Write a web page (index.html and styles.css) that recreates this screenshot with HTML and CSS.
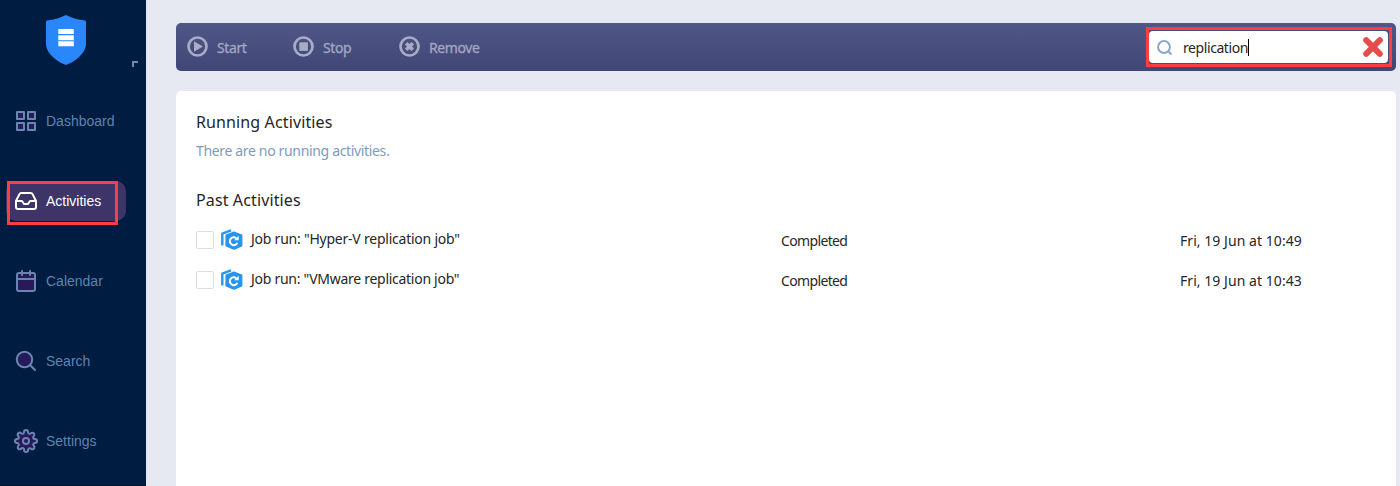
FILE: index.html
```html
<!DOCTYPE html>
<html lang="en">
<head>
<meta charset="utf-8">
<title>Activities</title>
<link rel="stylesheet" href="styles.css">
</head>
<body>
<div class="app">
  <aside class="sidebar">
    <div class="brand">
      <svg class="logo" width="40" height="50" viewBox="0 0 40 50">
        <path d="M20 0Q29 4.500 39 5.500Q40 5.700 40 7V29C40 38 29 47 20 50C11 47 0 38 0 29V7Q0 5.700 1 5.500Q11 4.500 20 0Z" fill="#2a87fb"/>
        <path d="M12.300 14h15.500v5h-15.500zM12.300 20.200h15.500v5h-15.500zM12.300 26.300h15.500v5h-15.500z" fill="#fff"/>
      </svg>
      <span class="collapse"></span>
    </div>
    <nav class="nav">
      <a class="nav-item">
        <svg class="nav-icon" viewBox="0 0 24 24"><path d="M3 3h7v7H3zM14 3h7v7h-7zM3 14h7v7H3zM14 14h7v7h-7z"/></svg>
        <span>Dashboard</span>
      </a>
      <a class="nav-item active">
        <svg class="nav-icon" viewBox="0 0 24 24"><path d="M22 12h-6l-2 3h-4l-2-3H2M5.450 5.110L2 12v6a2 2 0 0 0 2 2h16a2 2 0 0 0 2-2v-6l-3.450-6.890A2 2 0 0 0 16.760 4H7.240a2 2 0 0 0-1.790 1.110z"/></svg>
        <span>Activities</span>
      </a>
      <a class="nav-item">
        <svg class="nav-icon" viewBox="0 0 24 24"><rect x="3" y="4" width="18" height="18" rx="2"/><path d="M16 2v4M8 2v4M3 10h18"/></svg>
        <span>Calendar</span>
      </a>
      <a class="nav-item">
        <svg class="nav-icon" viewBox="0 0 24 24"><circle cx="10.500" cy="10.500" r="7.700"/><path d="M21 21l-4.800-4.800"/></svg>
        <span>Search</span>
      </a>
      <a class="nav-item">
        <svg class="nav-icon" viewBox="0 0 24 24"><path d="M19.400 15a1.650 1.650 0 0 0 .33 1.820l.06.06a2 2 0 1 1-2.830 2.830l-.06-.06a1.650 1.650 0 0 0-2.800 1.170V21a2 2 0 0 1-4 0v-.09A1.650 1.650 0 0 0 7.200 19.650l-.06.06a2 2 0 1 1-2.830-2.830l.06-.06A1.650 1.650 0 0 0 3.090 14H3a2 2 0 0 1 0-4h.09A1.650 1.650 0 0 0 4.370 7.180l-.06-.06a2 2 0 1 1 2.830-2.830l.06.06A1.650 1.650 0 0 0 10 3.090V3a2 2 0 0 1 4 0v.09a1.650 1.650 0 0 0 2.820 1.240l.06-.06a2 2 0 1 1 2.830 2.830l-.06.06A1.650 1.650 0 0 0 20.910 10H21a2 2 0 0 1 0 4h-.09a1.650 1.650 0 0 0-1.510 1z"/><circle cx="12" cy="12" r="3"/></svg>
        <span>Settings</span>
      </a>
    </nav>
  </aside>
  <main class="main">
    <header class="toolbar">
      <button class="action start">
        <svg class="action-icon" viewBox="0 0 21 21"><circle cx="10.500" cy="10.500" r="9"/><path d="M7 5.200L16 10.500L7 15.800Z"/></svg>
        <span>Start</span>
      </button>
      <button class="action stop">
        <svg class="action-icon" viewBox="0 0 21 21"><circle cx="10.500" cy="10.500" r="9"/><path d="M6.300 6.300h8.600v8.600h-8.600z"/></svg>
        <span>Stop</span>
      </button>
      <button class="action remove">
        <svg class="action-icon" viewBox="0 0 21 21"><circle cx="10.500" cy="10.500" r="9"/><path class="cross" d="M7.200 7.200l6.600 6.600M13.800 7.200l-6.600 6.600"/></svg>
        <span>Remove</span>
      </button>
      <div class="search">
        <div class="field">
          <svg class="search-icon" width="16" height="16" viewBox="0 0 16 16"><circle cx="7" cy="7" r="5.900"/><path d="M11.200 11.200L14.600 14.600"/></svg>
          <span class="query">replication</span><span class="caret"></span>
          <svg class="clear" width="22" height="22" viewBox="0 0 22 22"><path d="M4.200 4.200l13.600 13.600M17.800 4.200L4.200 17.800"/></svg>
        </div>
      </div>
    </header>
    <section class="panel">
      <h2 class="title running">Running Activities</h2>
      <p class="empty">There are no running activities.</p>
      <h2 class="title past">Past Activities</h2>
      <div class="row">
        <span class="checkbox"></span>
        <svg class="job-icon" width="22" height="22" viewBox="0 0 22 22"><path class="back" d="M1.300 16.500V4.600L10 1.300"/><path class="hex" d="M13 3.200L20.600 6.200V16.800L13 20L5.200 16.800V6.200Z"/><path class="arrow" d="M15.300 9.300A3.900 3.900 0 1 0 16.300 13.800"/><path class="tip" d="M17.700 6.800V11.300H13.200Z"/></svg>
        <span class="job">Job run: "Hyper-V replication job"</span>
        <span class="status">Completed</span>
        <span class="date">Fri, 19 Jun at 10:49</span>
      </div>
      <div class="row">
        <span class="checkbox"></span>
        <svg class="job-icon" width="22" height="22" viewBox="0 0 22 22"><path class="back" d="M1.300 16.500V4.600L10 1.300"/><path class="hex" d="M13 3.200L20.600 6.200V16.800L13 20L5.200 16.800V6.200Z"/><path class="arrow" d="M15.300 9.300A3.900 3.900 0 1 0 16.300 13.800"/><path class="tip" d="M17.700 6.800V11.300H13.200Z"/></svg>
        <span class="job vm">Job run: "VMware replication job"</span>
        <span class="status">Completed</span>
        <span class="date">Fri, 19 Jun at 10:43</span>
      </div>
    </section>
  </main>
</div>
</body>
</html>
```
FILE: styles.css
```css
* { box-sizing: border-box; }
body { margin: 0; font: 14px/20px Tahoma, "Noto Sans", sans-serif; color: #262626; }
.app { display: flex; height: 486px; overflow: hidden; background: #e6e9f2; }

.sidebar { width: 146px; flex: none; background: #001c40; border-bottom: 1px solid #001228; }
.brand { height: 101px; padding: 15px 0 0 46px; position: relative; }
.logo { display: block; }
.collapse { position: absolute; left: 132px; top: 61px; width: 6px; height: 6px; border: solid #6d8bb0; border-width: 2px 0 0 2px; }
.nav { display: flex; flex-direction: column; gap: 40px; padding-left: 6px; }
.nav-item { display: flex; align-items: center; gap: 8px; width: 120px; height: 40px; padding-left: 8px; border-radius: 10px; color: #5d84b0; font-family: "Liberation Sans", Arial, sans-serif; font-size: 14px; position: relative; }
.nav-icon { width: 24px; height: 24px; flex: none; fill: #28195a; stroke: #6887b0; stroke-width: 2; stroke-linecap: round; stroke-linejoin: round; overflow: visible; }
.active { background: #3d3468; color: #fff; }
.active .nav-icon { fill: none; stroke: #fff; }
.active::after { content: ""; box-sizing: border-box; position: absolute; left: 1px; top: 0; width: 111px; height: 44px; border: 3px solid #fb3f40; }

.main { flex: 1; padding: 23px 4px 0 30px; display: flex; flex-direction: column; gap: 20px; }
.toolbar { display: flex; align-items: center; height: 48px; padding: 0 4px 0 11px; border-radius: 5px; background: linear-gradient(#505685, #404676); flex: none; }
.action { display: flex; align-items: center; gap: 9px; padding: 0; border: 0; background: none; color: #a3a7c3; font: inherit; letter-spacing: -.4px; -webkit-text-stroke: .3px #a3a7c3; }
.action span { margin-top: 2px; }
.start { width: 106px; }
.stop { width: 106px; }
.action-icon { width: 21px; height: 21px; fill: #a9acc6; margin-top: -1px; }
.action-icon circle { fill: none; stroke: #a9acc6; stroke-width: 2.700; }
.action-icon .cross { stroke: #a9acc6; stroke-width: 3.600; }
.search { width: 246px; height: 40px; margin-left: auto; border: 3px solid #fb3f40; background: #464c7c; }
.field { display: flex; align-items: center; width: 239px; height: 32px; margin-top: 1px; padding: 0 4px 0 8px; border-radius: 4px; background: #fff; }
.search-icon { fill: none; stroke: #8ba7c8; stroke-width: 2; margin-top: 2px; }
.query { margin-left: 10px; letter-spacing: -.42px; margin-top: 2px; }
.caret { width: 1px; height: 17px; background: #000; }
.clear { margin-left: auto; fill: none; stroke: #e54d4d; stroke-width: 6; stroke-linecap: round; }

.panel { flex: 1; padding: 20px; border-radius: 5px 5px 0 0; background: #fff; }
.title { margin: 0; font-size: 16px; line-height: 22px; font-weight: 400; letter-spacing: .12px; }
.empty { margin: 8px 0 0; color: #809abd; letter-spacing: -.34px; }
.title.past { margin-top: 28px; margin-bottom: 9px; }
.row { display: flex; align-items: center; height: 40px; }
.checkbox { width: 18px; height: 18px; border: 1px solid #d7deea; border-radius: 2px; }
.job-icon { margin-left: 7px; }
.back { fill: none; stroke: #2794f0; stroke-width: 2.400; stroke-linejoin: round; }
.hex { fill: #2794f0; stroke: #2794f0; stroke-width: 1.600; stroke-linejoin: round; }
.arrow { fill: none; stroke: #fff; stroke-width: 2; }
.tip { fill: #fff; }
.job { width: 530px; margin: -2px 0 0 8px; letter-spacing: -.23px; }
.job.vm { letter-spacing: -.28px; }
.status { width: 399px; margin-top: 2px; letter-spacing: -.65px; }
.date { margin-top: 2px; letter-spacing: .05px; }
```
